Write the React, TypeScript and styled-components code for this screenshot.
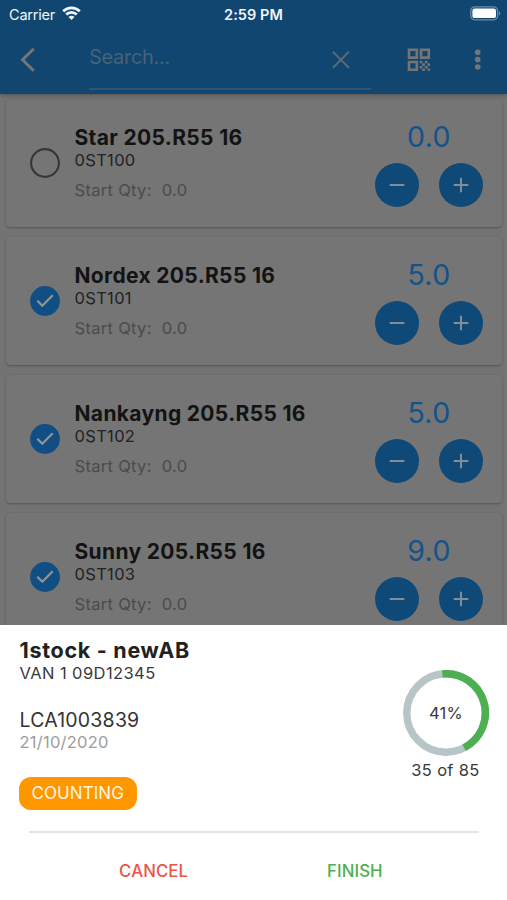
import React from 'react';
import styled, { createGlobalStyle } from 'styled-components';

const GlobalStyle = createGlobalStyle`
  * { box-sizing: border-box; }
  body { margin: 0; background: #757575; font-family: Inter, "Liberation Sans", sans-serif; }
`;

const Screen = styled.div`
  width: 507px;
  height: 900px;
  overflow: hidden;
  display: flex;
  flex-direction: column;
  background: #737373;
`;

const TopBar = styled.header`
  flex: none;
  height: 94px;
  background: #10466f;
  box-shadow: 0 1px 4px rgba(0, 0, 0, 0.3);
  z-index: 1;
`;

const StatusBar = styled.div`
  display: grid;
  grid-template-columns: 1fr auto 1fr;
  align-items: center;
  height: 28px;
  padding: 0 6px 0 9px;
  color: #f2f6f9;
  font-size: 14.5px;
`;

const Carrier = styled.div`
  display: flex;
  align-items: center;
  gap: 6.5px;
  letter-spacing: -0.2px;
`;

const Clock = styled.div`
  margin-right: 3px;
  font-weight: 600;
  letter-spacing: 0.07px;
`;

const BatterySlot = styled.div`
  display: flex;
  justify-content: flex-end;
`;

const Toolbar = styled.div`
  display: flex;
  align-items: flex-start;
  height: 66px;
  padding-left: 18px;
  color: #757575;
`;

const ToolIcon = styled.svg<{ $gap?: number }>`
  flex: none;
  display: block;
  margin-left: ${(p) => p.$gap ?? 0}px;
`;

const SearchField = styled.div`
  display: flex;
  justify-content: space-between;
  width: 282px;
  height: 61.5px;
  margin-left: 47px;
  padding-right: 20px;
  border-bottom: 2px solid #30566f;
`;

const Placeholder = styled.span`
  font-size: 20px;
  line-height: 28px;
  padding-top: 15px;
  letter-spacing: -0.3px;
  color: #45637a;
`;

const List = styled.main`
  flex: 1;
  min-height: 0;
  overflow: hidden;
  display: flex;
  flex-direction: column;
  gap: 10px;
  padding: 5px 5px 0 6px;
`;

const Card = styled.article`
  flex: none;
  display: flex;
  height: 128px;
  padding-left: 24px;
  border-radius: 4px;
  background: #757575;
  box-shadow: 0 1px 2px rgba(0, 0, 0, 0.24), 0 0 2px rgba(0, 0, 0, 0.08);
`;

const CheckIcon = styled.svg`
  flex: none;
  display: block;
  margin-top: 49px;
`;

const Details = styled.div`
  flex: 1;
  padding: 27px 0 0 14.5px;
`;

const ItemTitle = styled.h2`
  margin: 0;
  font-size: 21px;
  font-weight: 700;
  line-height: 23px;
  letter-spacing: 0.34px;
  color: #131313;
  white-space: nowrap;
`;

const ItemCode = styled.div`
  font-size: 16.5px;
  line-height: 22px;
  letter-spacing: 0.32px;
  color: #222;
`;

const StartQty = styled.div`
  display: flex;
  gap: 10px;
  margin-top: 8px;
  font-size: 16.5px;
  line-height: 22px;
  letter-spacing: 0.3px;
  color: #4b4b4b;
`;

const Counter = styled.div`
  width: 108px;
  margin-right: 19px;
  padding-top: 19px;
`;

const Quantity = styled.div`
  text-align: center;
  font-size: 28.5px;
  font-weight: 400;
  line-height: 37px;
  letter-spacing: 0.4px;
  color: #13528a;
`;

const StepRow = styled.div`
  display: flex;
  gap: 19.5px;
  margin-top: 8.4px;
`;

const StepButton = styled.button`
  display: flex;
  align-items: center;
  justify-content: center;
  width: 44px;
  height: 44px;
  padding: 0;
  border: 0;
  border-radius: 50%;
  background: #0f4977;
  color: #858d94;
`;

const Sheet = styled.section`
  flex: none;
  height: 275px;
  padding: 13px 18px 0 19.5px;
  background: #fff;
  z-index: 2;
`;

const Summary = styled.div`
  display: flex;
  justify-content: space-between;
  height: 193px;
`;

const SheetTitle = styled.h1`
  margin: 0;
  font-size: 21.5px;
  font-weight: 700;
  line-height: 25px;
  letter-spacing: 0.7px;
  color: #212121;
`;

const Vehicle = styled.div`
  font-size: 16.5px;
  line-height: 20px;
  letter-spacing: 0.42px;
  color: #3a3a3a;
`;

const Reference = styled.div`
  margin-top: 25px;
  font-size: 19.5px;
  line-height: 24px;
  letter-spacing: 0.2px;
  color: #333;
`;

const DateText = styled.div`
  font-size: 16.5px;
  line-height: 20px;
  letter-spacing: 0.25px;
  color: #9d9d9d;
`;

const Chip = styled.div`
  width: 117.5px;
  height: 33px;
  margin: 24.5px 0 0 -0.5px;
  border-radius: 12px;
  background: #ff9800;
  color: #fff5e2;
  font-size: 17px;
  line-height: 33px;
  letter-spacing: 0.05px;
  text-align: center;
`;

const Progress = styled.div`
  width: 86px;
  padding-top: 32px;
  text-align: center;
  color: #3a3a3a;
  font-size: 16.5px;
  letter-spacing: 0.33px;
  white-space: nowrap;
`;

const Ring = styled.div`
  display: grid;
  place-items: center;
  height: 86px;
  > * { grid-area: 1 / 1; }
`;

const ProgressCount = styled.div`
  margin: 3.5px 1px 0 0;
  line-height: 21px;
`;

const Divider = styled.hr`
  height: 1.5px;
  margin: 0 10px 0 9.5px;
  border: 0;
  background: #e2e2e2;
`;

const Actions = styled.div`
  display: grid;
  grid-template-columns: 1fr 1fr;
  margin: 0 33.5px;
  padding-top: 23px;
`;

const Action = styled.button<{ $color: string }>`
  padding: 0;
  border: 0;
  background: none;
  font: 500 16.8px/30px Inter, sans-serif;
  letter-spacing: 0.1px;
  color: ${(p) => p.$color};
`;

const items = [
  { name: 'Star 205.R55 16', code: '0ST100', qty: '0.0', counted: false },
  { name: 'Nordex 205.R55 16', code: '0ST101', qty: '5.0', counted: true },
  { name: 'Nankayng 205.R55 16', code: '0ST102', qty: '5.0', counted: true },
  { name: 'Sunny 205.R55 16', code: '0ST103', qty: '9.0', counted: true },
];

function Wifi() {
  return (
    <svg width="19" height="16" viewBox="0 0 19 16" fill="none" stroke="currentColor" strokeWidth="2.8">
      <path d="M1.2 5.2a11.8 11.8 0 0 1 16.6 0" />
      <path d="M4.2 8.5a7.5 7.5 0 0 1 10.6 0" />
      <path d="M9.5 14 6.5 11a4.2 4.2 0 0 1 6 0z" fill="currentColor" stroke="none" />
    </svg>
  );
}

function Battery() {
  return (
    <svg width="31" height="16" viewBox="0 0 31 16">
      <rect x="0.8" y="0.8" width="26.8" height="13" rx="4" fill="none" stroke="#6a8eaa" strokeWidth="1.3" />
      <rect x="2.4" y="2.5" width="23.6" height="9.6" rx="2.2" fill="#fff" />
      <path d="M29 5.2v4.2c1.8-.8 1.8-3.4 0-4.2z" fill="#6a8eaa" />
    </svg>
  );
}

function Check({ on }: { on: boolean }) {
  return (
    <CheckIcon width="30" height="30" viewBox="0 0 30 30" fill="none">
      {on ? (
        <>
          <circle cx="15" cy="15" r="14.9" fill="#114e84" />
          <path d="m7.3 14.7 5 5L22.7 9.3" stroke="#8e969d" strokeWidth="2.2" />
        </>
      ) : (
        <circle cx="15" cy="15" r="13.9" stroke="#363636" strokeWidth="2.1" />
      )}
    </CheckIcon>
  );
}

function Item({ name, code, qty, counted }: (typeof items)[number]) {
  return (
    <Card>
      <Check on={counted} />
      <Details>
        <ItemTitle>{name}</ItemTitle>
        <ItemCode>{code}</ItemCode>
        <StartQty>
          <span>Start Qty:</span>
          <span>0.0</span>
        </StartQty>
      </Details>
      <Counter>
        <Quantity>{qty}</Quantity>
        <StepRow>
          <StepButton aria-label="Decrease">
            <svg width="16" height="16" stroke="currentColor" strokeWidth="2"><path d="M.7 8h14.6" /></svg>
          </StepButton>
          <StepButton aria-label="Increase">
            <svg width="16" height="16" stroke="currentColor" strokeWidth="2"><path d="M.7 8h14.6M8 .7v14.6" /></svg>
          </StepButton>
        </StepRow>
      </Counter>
    </Card>
  );
}

export default function App() {
  return (
    <>
      <GlobalStyle />
      <Screen>
        <TopBar>
          <StatusBar>
            <Carrier>Carrier <Wifi /></Carrier>
            <Clock>2:59 PM</Clock>
            <BatterySlot><Battery /></BatterySlot>
          </StatusBar>
          <Toolbar>
            <ToolIcon width="24" height="62" fill="none" stroke="currentColor" strokeWidth="3">
              <path d="M15.7 20.7 4.6 31.7l11.1 11" />
            </ToolIcon>
            <SearchField>
              <Placeholder>Search...</Placeholder>
              <ToolIcon width="20" height="59" fill="none" stroke="#566978" strokeWidth="2.2">
                <path d="m1.9 23.7 16 16M17.9 23.7l-16 16" />
              </ToolIcon>
            </SearchField>
            <ToolIcon $gap={36} width="24" height="62" viewBox="0 19 24 62" fill="currentColor">
              <path d="M.7 39.5h10.4v10.4H.7zM3.3 42.1v5.2h5.2v-5.2zM12.7 39.5h10.4v10.4H12.7zM15.3 42.1v5.2h5.2v-5.2zM.7 51.7h10.4v10.4H.7zM3.3 54.3v5.2h5.2v-5.2z" fillRule="evenodd" />
              <path d="M12.7 51.7h2.6v2.6h-2.6zM17.9 51.7h2.6v2.6h-2.6zM15.3 54.3h2.6v2.6h-2.6zM20.5 54.3h2.6v2.6h-2.6zM12.7 56.9h2.6v2.6h-2.6zM17.9 56.9h2.6v2.6h-2.6zM15.3 59.5h2.6v2.6h-2.6zM20.5 59.5h2.6v2.6h-2.6z" />
            </ToolIcon>
            <ToolIcon $gap={42} width="10" height="60" fill="currentColor">
              <circle cx="4.7" cy="24.2" r="2.8" />
              <circle cx="4.7" cy="31.6" r="2.8" />
              <circle cx="4.7" cy="39" r="2.8" />
            </ToolIcon>
          </Toolbar>
        </TopBar>
        <List>
          {items.map((item) => <Item key={item.code} {...item} />)}
        </List>
        <Sheet>
          <Summary>
            <div>
              <SheetTitle>1stock - newAB</SheetTitle>
              <Vehicle>VAN 1 09D12345</Vehicle>
              <Reference>LCA1003839</Reference>
              <DateText>21/10/2020</DateText>
              <Chip>COUNTING</Chip>
            </div>
            <Progress>
              <Ring>
                <svg width="86" height="86" viewBox="0 0 86 86" fill="none" strokeWidth="7.4">
                  <circle cx="43" cy="43" r="39.2" stroke="#b7c5c9" />
                  <path d="M39.4 3.9A39.2 39.2 0 0 1 61.1 77.8" stroke="#4caf50" />
                </svg>
                <span>41%</span>
              </Ring>
              <ProgressCount>35 of 85</ProgressCount>
            </Progress>
          </Summary>
          <Divider />
          <Actions>
            <Action $color="#ed5248">CANCEL</Action>
            <Action $color="#4caf50">FINISH</Action>
          </Actions>
        </Sheet>
      </Screen>
    </>
  );
}
